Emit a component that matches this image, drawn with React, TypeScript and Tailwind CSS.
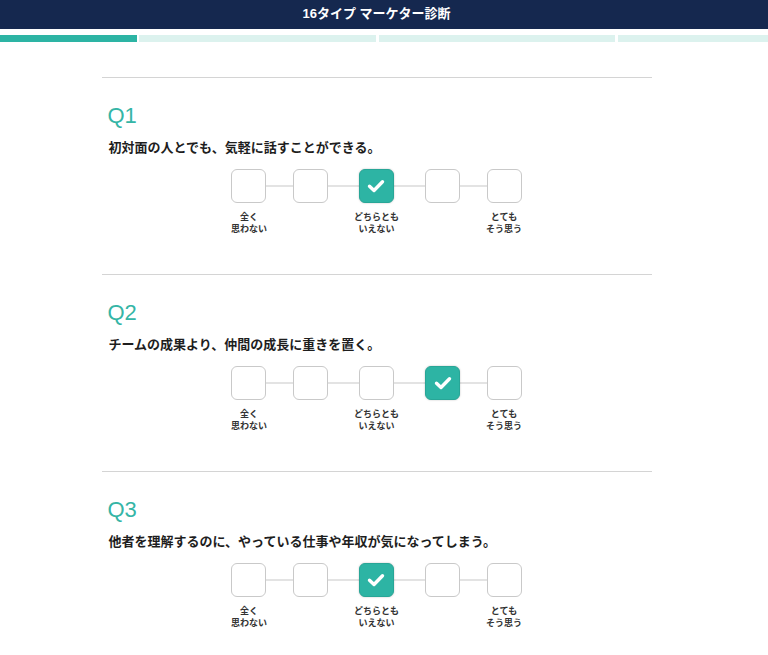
import React from "react";

const questions = [
  { no: "Q1", text: "初対面の人とでも、気軽に話すことができる。", checked: 2 },
  { no: "Q2", text: "チームの成果より、仲間の成長に重きを置く。", checked: 3 },
  { no: "Q3", text: "他者を理解するのに、やっている仕事や年収が気になってしまう。", checked: 2 },
];

const labels: (string[] | null)[] = [
  ["全く", "思わない"],
  null,
  ["どちらとも", "いえない"],
  null,
  ["とても", "そう思う"],
];

function Check() {
  return (
    <svg width="18" height="14" viewBox="0 0 18 14" fill="none">
      <path d="M2.5 7.2 L7 11.5 L15.5 2.8" stroke="white" strokeWidth="3.4" strokeLinecap="round" strokeLinejoin="round" />
    </svg>
  );
}

function Scale({ checked }: { checked: number }) {
  return (
    <div className="flex justify-center">
      <div className="relative flex gap-[26px]">
        <div className="absolute top-[16px] left-[18px] right-[18px] h-[2px] bg-[#e3e3e3]" />
        {labels.map((l, i) => (
          <div key={i} className="relative flex flex-col items-center">
            {i === checked ? (
              <div className="w-[35px] h-[34px] rounded-[6px] bg-[#2db4a4] border border-[#28a697] shadow-[0_0_2px_rgba(0,0,0,0.25)] flex items-center justify-center">
                <Check />
              </div>
            ) : (
              <div className="w-[35px] h-[34px] rounded-[6px] bg-white border-[1.5px] border-[#c9c9c9]" />
            )}
            <div className="mt-[8px] h-[24px] text-[9px] leading-[12px] font-bold text-[#333] text-center whitespace-nowrap">
              {l ? (
                <>
                  <div>{l[0]}</div>
                  <div>{l[1]}</div>
                </>
              ) : null}
            </div>
          </div>
        ))}
      </div>
    </div>
  );
}

export default function App() {
  return (
    <div
      className="w-[768px] h-[655px] bg-white overflow-hidden"
      style={{ fontFamily: '"Liberation Sans", "Noto Sans CJK JP", sans-serif' }}
    >
      <div className="h-[29px] bg-[#15284f] flex">
        <div className="w-[753px] flex items-center justify-center text-white text-[13px] font-bold pb-[2px]">
          16タイプ マーケター診断
        </div>
      </div>
      <div className="flex mt-[6px] h-[7px]">
        <div className="w-[137px] bg-[#2db4a4]" />
        <div className="w-[237px] ml-[2px] bg-[#dcf2ee]" />
        <div className="w-[236px] ml-[3px] bg-[#dcf2ee]" />
        <div className="flex-1 ml-[3px] bg-[#dcf2ee]" />
      </div>
      <div className="w-[753px] flex justify-center pt-[35px]">
        <div className="w-[550px]">
          {questions.map((q) => (
            <div key={q.no} className="border-t-[1.5px] border-[#d4d4d4] pt-[28px] pb-[39px]">
              <div className="pl-[6px] text-[22px] leading-[20px] text-[#35b5a6]">{q.no}</div>
              <div
                className="pl-[7px] mt-[12px] text-[13px] leading-[18px] font-bold text-[#1e1e1e]"
                style={{ fontFamily: '"Noto Sans CJK JP", sans-serif' }}
              >
                {q.text}
              </div>
              <div className="mt-[13px]" style={{ fontFamily: '"Noto Sans CJK JP", sans-serif' }}>
                <Scale checked={q.checked} />
              </div>
            </div>
          ))}
        </div>
      </div>
    </div>
  );
}
